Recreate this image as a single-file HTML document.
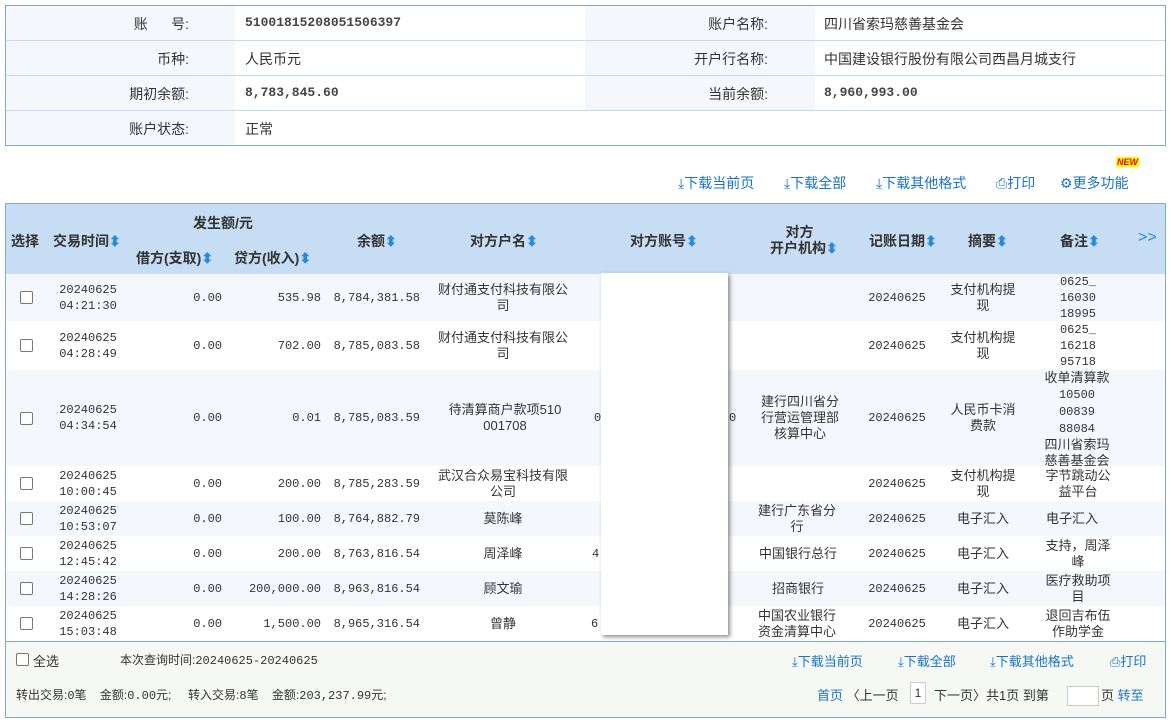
<!DOCTYPE html>
<html><head><meta charset="utf-8">
<style>
*{margin:0;padding:0;box-sizing:border-box}
body{width:1171px;height:720px;background:#fff;font-family:"Liberation Sans","Noto Sans CJK SC",sans-serif;font-size:13px;color:#333;position:relative;overflow:hidden}
.a{position:absolute}
.m{font-family:"Liberation Mono","Noto Sans CJK SC",monospace;font-size:12px}
.info{left:5px;top:5px;width:1161px;height:141px;border:1px solid #7fa8d6}
.lab{background:#f4f8fc}
.hl{height:1px;background:#c7d9ec}
.cell{display:flex;align-items:center;justify-content:center;text-align:center;line-height:16px;word-break:break-all}
.r{justify-content:flex-end;text-align:right}
.cb{width:13px;height:13px;border:1px solid #777;border-radius:2px;background:#fff}
.lk{color:#1a73c8;font-size:14px}
.hd{font-weight:bold;color:#333;font-size:14px}
.s{color:#2a8ad8}
</style></head><body>

<div class="a info"></div>
<div class="a lab" style="left:6px;top:6px;width:229px;height:139px"></div>
<div class="a lab" style="left:585px;top:6px;width:230px;height:104px"></div>
<div class="a hl" style="left:6px;top:40px;width:1159px"></div>
<div class="a hl" style="left:6px;top:75px;width:1159px"></div>
<div class="a hl" style="left:6px;top:110px;width:1159px"></div>
<div class="a" style="left:6px;top:14px;width:183px;text-align:right;font-size:14px">账&nbsp;&nbsp;&nbsp;&nbsp;&nbsp;&nbsp;号:</div>
<div class="a m" style="left:245px;top:15px;font-weight:bold;font-size:13px;color:#444">51001815208051506397</div>
<div class="a" style="left:6px;top:49px;width:183px;text-align:right;font-size:14px">币种:</div>
<div class="a" style="left:245px;top:49px;font-size:14px">人民币元</div>
<div class="a" style="left:6px;top:84px;width:183px;text-align:right;font-size:14px">期初余额:</div>
<div class="a m" style="left:245px;top:85px;font-weight:bold;font-size:13px;color:#444">8,783,845.60</div>
<div class="a" style="left:6px;top:119px;width:183px;text-align:right;font-size:14px">账户状态:</div>
<div class="a" style="left:245px;top:119px;font-size:14px">正常</div>
<div class="a" style="left:585px;top:14px;width:183px;text-align:right;font-size:14px">账户名称:</div>
<div class="a" style="left:824px;top:14px;font-size:14px">四川省索玛慈善基金会</div>
<div class="a" style="left:585px;top:49px;width:183px;text-align:right;font-size:14px">开户行名称:</div>
<div class="a" style="left:824px;top:49px;font-size:14px">中国建设银行股份有限公司西昌月城支行</div>
<div class="a" style="left:585px;top:84px;width:183px;text-align:right;font-size:14px">当前余额:</div>
<div class="a m" style="left:824px;top:85px;font-weight:bold;font-size:13px;color:#444">8,960,993.00</div>

<div class="a" style="left:1116px;top:157px;font-size:9px;font-weight:bold;color:#e00;background:#ff0;line-height:10px;padding:0 1px;font-style:italic">NEW</div>
<div class="a lk" style="left:678px;top:173px">⤓下载当前页</div>
<div class="a lk" style="left:784px;top:173px">⤓下载全部</div>
<div class="a lk" style="left:876px;top:173px">⤓下载其他格式</div>
<div class="a lk" style="left:996px;top:173px">⎙打印</div>
<div class="a lk" style="left:1060px;top:173px">⚙更多功能</div>

<div class="a" style="left:5px;top:203px;width:1161px;height:515px;border:1px solid #7fa8d6"></div>
<div class="a" style="left:6px;top:204px;width:1159px;height:70px;background:#c6ddf3"></div>
<div class="a hd" style="left:193px;top:213px">发生额/元</div>
<div class="a hd" style="left:11px;top:231px">选择</div>
<div class="a hd" style="left:53px;top:231px">交易时间<span class="s">⬍</span></div>
<div class="a hd" style="left:136px;top:248px">借方(支取)<span class="s">⬍</span></div>
<div class="a hd" style="left:234px;top:248px">贷方(收入)<span class="s">⬍</span></div>
<div class="a hd" style="left:357px;top:231px">余额<span class="s">⬍</span></div>
<div class="a hd" style="left:470px;top:231px">对方户名<span class="s">⬍</span></div>
<div class="a hd" style="left:630px;top:231px">对方账号<span class="s">⬍</span></div>
<div class="a hd" style="left:770px;top:224px;width:80px;line-height:16px;text-align:left">&nbsp;&nbsp;&nbsp;&nbsp;对方<br>开户机构<span class="s">⬍</span></div>
<div class="a hd" style="left:869px;top:231px">记账日期<span class="s">⬍</span></div>
<div class="a hd" style="left:968px;top:231px">摘要<span class="s">⬍</span></div>
<div class="a hd" style="left:1060px;top:231px">备注<span class="s">⬍</span></div>
<div class="a" style="left:1138px;top:229px;color:#2a8ad8;font-size:16px">&gt;&gt;</div>

<div class="a" style="left:6px;top:274px;width:1159px;height:47px;background:#f4f8fc"></div>
<div class="a" style="left:6px;top:370px;width:1159px;height:96px;background:#f4f8fc"></div>
<div class="a" style="left:6px;top:501px;width:1159px;height:35px;background:#f4f8fc"></div>
<div class="a" style="left:6px;top:571px;width:1159px;height:35px;background:#f4f8fc"></div>

<div class="a" style="left:0;top:274px;height:47px;width:1171px">
 <div class="a cell" style="left:20px;top:0;height:47px"><div class="cb"></div></div>
 <div class="a cell m" style="left:53px;width:70px;height:47px">20240625<br>04:21:30</div>
 <div class="a cell r m" style="left:130px;width:92px;height:47px">0.00</div>
 <div class="a cell r m" style="left:230px;width:91px;height:47px">535.98</div>
 <div class="a cell r m" style="left:325px;width:95px;height:47px">8,784,381.58</div>
 <div class="a cell" style="left:435px;width:136px;height:47px">财付通支付科技有限公司</div>
 <div class="a cell m" style="left:860px;width:74px;height:47px">20240625</div>
 <div class="a cell" style="left:950px;width:66px;height:47px">支付机构提现</div>
 <div class="a cell m" style="left:1048px;width:60px;height:47px">0625_<br>16030<br>18995</div>
</div>
<div class="a" style="left:0;top:321px;height:49px;width:1171px">
 <div class="a cell" style="left:20px;height:49px"><div class="cb"></div></div>
 <div class="a cell m" style="left:53px;width:70px;height:49px">20240625<br>04:28:49</div>
 <div class="a cell r m" style="left:130px;width:92px;height:49px">0.00</div>
 <div class="a cell r m" style="left:230px;width:91px;height:49px">702.00</div>
 <div class="a cell r m" style="left:325px;width:95px;height:49px">8,785,083.58</div>
 <div class="a cell" style="left:435px;width:136px;height:49px">财付通支付科技有限公司</div>
 <div class="a cell m" style="left:860px;width:74px;height:49px">20240625</div>
 <div class="a cell" style="left:950px;width:66px;height:49px">支付机构提现</div>
 <div class="a cell m" style="left:1048px;width:60px;height:49px">0625_<br>16218<br>95718</div>
</div>
<div class="a" style="left:0;top:370px;height:96px;width:1171px">
 <div class="a cell" style="left:20px;height:96px"><div class="cb"></div></div>
 <div class="a cell m" style="left:53px;width:70px;height:96px">20240625<br>04:34:54</div>
 <div class="a cell r m" style="left:130px;width:92px;height:96px">0.00</div>
 <div class="a cell r m" style="left:230px;width:91px;height:96px">0.01</div>
 <div class="a cell r m" style="left:325px;width:95px;height:96px">8,785,083.59</div>
 <div class="a cell" style="left:440px;width:130px;height:96px">待清算商户款项510<br>001708</div>
 <div class="a cell m" style="left:594px;height:96px">0</div>
 <div class="a cell m" style="left:729px;height:96px">0</div>
 <div class="a cell" style="left:758px;width:84px;height:96px">建行四川省分行营运管理部核算中心</div>
 <div class="a cell m" style="left:860px;width:74px;height:96px">20240625</div>
 <div class="a cell" style="left:950px;width:66px;height:96px">人民币卡消费款</div>
 <div class="a cell" style="left:1034px;width:86px;height:96px;display:block;line-height:16px;font-size:13px">收单清算款<br><span class="m">10500</span><br><span class="m">00839</span><br><span class="m">88084</span><br>四川省索玛<br>慈善基金会</div>
</div>
<div class="a" style="left:0;top:466px;height:35px;width:1171px">
 <div class="a cell" style="left:20px;height:35px"><div class="cb"></div></div>
 <div class="a cell m" style="left:53px;width:70px;height:35px">20240625<br>10:00:45</div>
 <div class="a cell r m" style="left:130px;width:92px;height:35px">0.00</div>
 <div class="a cell r m" style="left:230px;width:91px;height:35px">200.00</div>
 <div class="a cell r m" style="left:325px;width:95px;height:35px">8,785,283.59</div>
 <div class="a cell" style="left:435px;width:136px;height:35px">武汉合众易宝科技有限公司</div>
 <div class="a cell m" style="left:860px;width:74px;height:35px">20240625</div>
 <div class="a cell" style="left:950px;width:66px;height:35px">支付机构提现</div>
 <div class="a cell" style="left:1044px;width:68px;height:35px">字节跳动公益平台</div>
</div>
<div class="a" style="left:0;top:501px;height:35px;width:1171px">
 <div class="a cell" style="left:20px;height:35px"><div class="cb"></div></div>
 <div class="a cell m" style="left:53px;width:70px;height:35px">20240625<br>10:53:07</div>
 <div class="a cell r m" style="left:130px;width:92px;height:35px">0.00</div>
 <div class="a cell r m" style="left:230px;width:91px;height:35px">100.00</div>
 <div class="a cell r m" style="left:325px;width:95px;height:35px">8,764,882.79</div>
 <div class="a cell" style="left:435px;width:136px;height:35px">莫陈峰</div>
 <div class="a cell" style="left:755px;width:84px;height:35px">建行广东省分行</div>
 <div class="a cell m" style="left:860px;width:74px;height:35px">20240625</div>
 <div class="a cell" style="left:950px;width:66px;height:35px">电子汇入</div>
 <div class="a cell" style="left:1040px;width:64px;height:35px">电子汇入</div>
</div>
<div class="a" style="left:0;top:536px;height:35px;width:1171px">
 <div class="a cell" style="left:20px;height:35px"><div class="cb"></div></div>
 <div class="a cell m" style="left:53px;width:70px;height:35px">20240625<br>12:45:42</div>
 <div class="a cell r m" style="left:130px;width:92px;height:35px">0.00</div>
 <div class="a cell r m" style="left:230px;width:91px;height:35px">200.00</div>
 <div class="a cell r m" style="left:325px;width:95px;height:35px">8,763,816.54</div>
 <div class="a cell" style="left:435px;width:136px;height:35px">周泽峰</div>
 <div class="a cell m" style="left:592px;height:35px">4</div>
 <div class="a cell" style="left:752px;width:92px;height:35px">中国银行总行</div>
 <div class="a cell m" style="left:860px;width:74px;height:35px">20240625</div>
 <div class="a cell" style="left:950px;width:66px;height:35px">电子汇入</div>
 <div class="a cell" style="left:1044px;width:68px;height:35px">支持，周泽峰</div>
</div>
<div class="a" style="left:0;top:571px;height:35px;width:1171px">
 <div class="a cell" style="left:20px;height:35px"><div class="cb"></div></div>
 <div class="a cell m" style="left:53px;width:70px;height:35px">20240625<br>14:28:26</div>
 <div class="a cell r m" style="left:130px;width:92px;height:35px">0.00</div>
 <div class="a cell r m" style="left:230px;width:91px;height:35px">200,000.00</div>
 <div class="a cell r m" style="left:325px;width:95px;height:35px">8,963,816.54</div>
 <div class="a cell" style="left:435px;width:136px;height:35px">顾文瑜</div>
 <div class="a cell" style="left:752px;width:92px;height:35px">招商银行</div>
 <div class="a cell m" style="left:860px;width:74px;height:35px">20240625</div>
 <div class="a cell" style="left:950px;width:66px;height:35px">电子汇入</div>
 <div class="a cell" style="left:1044px;width:68px;height:35px">医疗救助项目</div>
</div>
<div class="a" style="left:0;top:606px;height:35px;width:1171px">
 <div class="a cell" style="left:20px;height:35px"><div class="cb"></div></div>
 <div class="a cell m" style="left:53px;width:70px;height:35px">20240625<br>15:03:48</div>
 <div class="a cell r m" style="left:130px;width:92px;height:35px">0.00</div>
 <div class="a cell r m" style="left:230px;width:91px;height:35px">1,500.00</div>
 <div class="a cell r m" style="left:325px;width:95px;height:35px">8,965,316.54</div>
 <div class="a cell" style="left:435px;width:136px;height:35px">曾静</div>
 <div class="a cell m" style="left:591px;height:35px">6</div>
 <div class="a cell" style="left:755px;width:84px;height:35px">中国农业银行资金清算中心</div>
 <div class="a cell m" style="left:860px;width:74px;height:35px">20240625</div>
 <div class="a cell" style="left:950px;width:66px;height:35px">电子汇入</div>
 <div class="a cell" style="left:1044px;width:68px;height:35px">退回吉布伍作助学金</div>
</div>

<div class="a" style="left:601px;top:273px;width:127px;height:362px;background:#fff;box-shadow:2px 2px 4px rgba(0,0,0,.45)"></div>

<div class="a" style="left:6px;top:641px;width:1159px;height:76px;background:#f6f8f4;border-top:1px solid #7fa8d6"></div>
<div class="a cb" style="left:16px;top:653px"></div>
<div class="a" style="left:33px;top:651px">全选</div>
<div class="a" style="left:120px;top:651px;font-size:12px">本次查询时间:<span class="m">20240625-20240625</span></div>
<div class="a lk" style="left:792px;top:651px;font-size:13px">⤓下载当前页</div>
<div class="a lk" style="left:898px;top:651px;font-size:13px">⤓下载全部</div>
<div class="a lk" style="left:990px;top:651px;font-size:13px">⤓下载其他格式</div>
<div class="a lk" style="left:1110px;top:651px;font-size:13px">⎙打印</div>
<div class="a" style="left:16px;top:686px;font-size:12px">转出交易:<span class="m">0</span>笔&nbsp;&nbsp;&nbsp;&nbsp;金额:<span class="m">0.00</span>元;&nbsp;&nbsp;&nbsp;&nbsp;&nbsp;转入交易:<span class="m">8</span>笔&nbsp;&nbsp;&nbsp;&nbsp;金额:<span class="m">203,237.99</span>元;</div>
<div class="a" style="left:817px;top:685px;font-size:13px"><span style="color:#1a73c8">首页</span> 〈上一页 </div>
<div class="a" style="left:910px;top:682px;width:16px;height:22px;border:1px solid #ccc;background:#fff;text-align:center;line-height:20px;font-size:12px">1</div>
<div class="a" style="left:934px;top:685px;font-size:13px">下一页〉共1页 到第</div>
<div class="a" style="left:1067px;top:686px;width:32px;height:20px;border:1px solid #ccc;background:#fff"></div>
<div class="a" style="left:1101px;top:685px;font-size:13px">页 <span style="color:#1a73c8">转至</span></div>
</body></html>
